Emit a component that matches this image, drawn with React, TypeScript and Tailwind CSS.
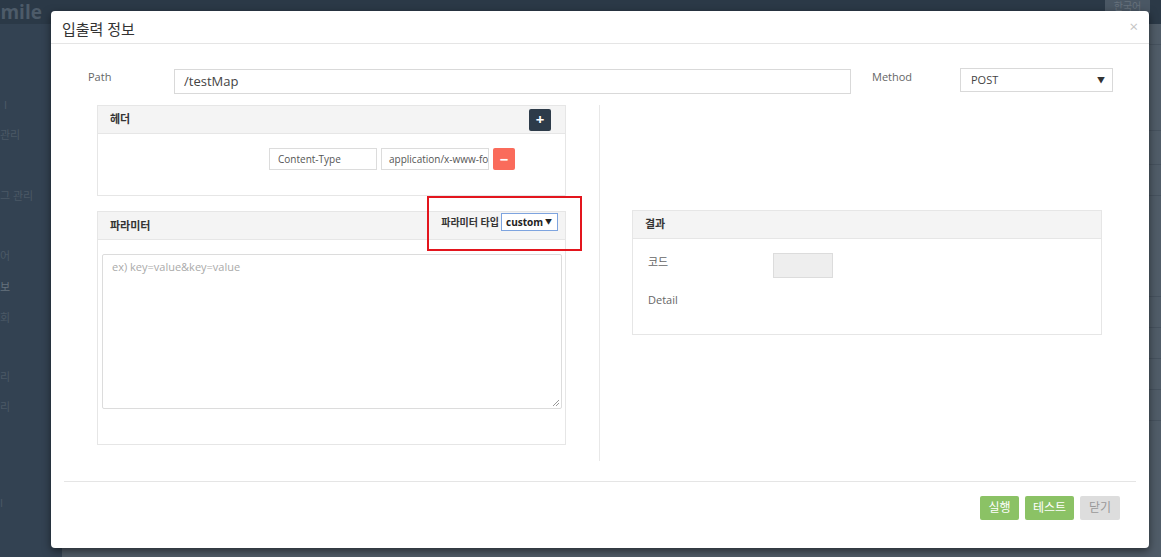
import React from "react";

const font = "font-['Open_Sans','Noto_Sans_CJK_KR',sans-serif]";

function PanelHeading({ children }: { children: React.ReactNode }) {
  return (
    <div className="flex h-[28px] items-center justify-between border-b border-[#e6e6e6] bg-[#f4f4f4] pl-[12px] pr-[14px]">
      {children}
    </div>
  );
}

export default function App() {
  return (
    <div className={`relative h-[557px] w-[1161px] overflow-hidden bg-[#505c68] ${font}`}>
      {/* background page (dimmed) */}
      <div className="flex h-full flex-col">
        <div className="flex h-[24px] items-start justify-between bg-[#2b3947]">
          <span className="-ml-[10px] text-[19px] font-bold leading-[24px] text-[#4d5b69]">Smile</span>
          <span className="mr-[11px] h-[13px] w-[45px] bg-[#4a5764] text-center text-[10px] leading-[13px] text-[#66717c]">한국어</span>
        </div>
        <div className="flex flex-1">
          <div className="flex w-[62px] flex-col bg-[#334252] text-[11px] text-[#4b5966]">
            <div className="mt-[74px] leading-[14px]">Ⅰ</div>
            <div className="mt-[16px] leading-[14px]">관리</div>
            <div className="mt-[47px] leading-[14px]">그 관리</div>
            <div className="mt-[46px] leading-[14px]">어</div>
            <div className="mt-[17px] leading-[14px] text-[#66727e]">보</div>
            <div className="mt-[17px] leading-[14px]">회</div>
            <div className="mt-[45px] leading-[14px]">리</div>
            <div className="mt-[16px] leading-[14px]">리</div>
            <div className="mt-[82px] leading-[14px]">I</div>
          </div>
          <div className="flex flex-1 flex-col">
            <div className="mt-[20px] h-[1px] bg-[#46525e]" />
            <div className="mt-[85px] h-[1px] bg-[#46525e]" />
            <div className="mt-[33px] h-[1px] bg-[#46525e]" />
            <div className="mt-[30px] h-[1px] bg-[#46525e]" />
            <div className="mt-[100px] h-[1px] bg-[#46525e]" />
            <div className="mt-[30px] h-[1px] bg-[#46525e]" />
            <div className="mt-[30px] h-[1px] bg-[#46525e]" />
            <div className="mt-[30px] h-[1px] bg-[#46525e]" />
            <div className="mt-[30px] h-[1px] bg-[#46525e]" />
          </div>
        </div>
      </div>

      {/* modal */}
      <div className="absolute left-[51px] top-[11px] flex h-[537px] w-[1098px] flex-col rounded-[4px] bg-white shadow-[0_3px_9px_rgba(0,0,0,0.5)]">
        <div className="flex h-[33px] items-center justify-between border-b border-[#e5e5e5] pl-[11px] pr-[11px]">
          <span className="mt-[4px] text-[15px] text-[#333]">입출력 정보</span>
          <span className="mt-[-2px] text-[15px] leading-none text-[#c4c4c4]">×</span>
        </div>

        {/* path / method row */}
        <div className="mt-[25px] flex items-start pl-[37px]">
          <span className="w-[86px] text-[11px] text-[#666]">Path</span>
          <div className="flex h-[25px] w-[677px] items-center border border-[#d9d9d9] px-[9px] text-[13px] text-[#444]">
            /testMap
          </div>
          <span className="ml-[21px] w-[88px] text-[11px] text-[#666]">Method</span>
          <div className="-mt-[1px] flex h-[24px] w-[153px] items-center justify-between border border-[#d9d9d9] pl-[10px] pr-[7px] text-[11px] text-[#444]">
            <span>POST</span>
            <span className="text-[8px] text-[#333]">▼</span>
          </div>
        </div>

        {/* columns */}
        <div className="mt-[11px] flex pl-[46px]">
          <div className="flex w-[469px] flex-col">
            <div className="h-[91px] border border-[#e6e6e6]">
              <PanelHeading>
                <span className="text-[11px] font-bold text-[#333]">헤더</span>
                <span className="flex h-[22px] w-[22px] items-center justify-center rounded-[2px] bg-[#2d3b4a] text-[15px] font-bold leading-none text-white">+</span>
              </PanelHeading>
              <div className="flex gap-[4px] pl-[171px] pt-[14px]">
                <div className="flex h-[22px] w-[108px] items-center border border-[#dcdcdc] px-[8px] text-[10px] text-[#555]">Content-Type</div>
                <div className="flex h-[22px] w-[108px] items-center overflow-hidden whitespace-nowrap border border-[#dcdcdc] px-[7px] text-[10px] text-[#555]">application/x-www-form</div>
                <span className="flex h-[22px] w-[22px] items-center justify-center rounded-[2px] bg-[#fa6b5b] text-[15px] font-bold leading-none text-white">−</span>
              </div>
            </div>

            <div className="mt-[15px] h-[234px] border border-[#e6e6e6]">
              <div className="flex h-[28px] items-start justify-between border-b border-[#e6e6e6] bg-[#f4f4f4] pl-[12px] pr-[7px]">
                <span className="mt-[6px] text-[11px] font-bold text-[#333]">파라미터</span>
                <div className="mt-[1px] flex items-center gap-[2px]">
                  <span className="text-[10px] font-semibold text-[#333]">파라미터 타입</span>
                  <div className="flex h-[18px] w-[57px] items-center justify-between border border-[#7ea4df] bg-white pl-[4px] pr-[5px] text-[10px] font-bold text-[#222]">
                    <span>custom</span>
                    <span className="text-[7px]">▼</span>
                  </div>
                </div>
              </div>
              <div className="pl-[4px] pr-[3px] pt-[14px]">
                <div className="relative h-[155px] rounded-[2px] border border-[#dcdcdc] px-[9px] pt-[4px] text-[11px] text-[#aaa]">
                  ex) key=value&amp;key=value
                  <svg className="absolute bottom-[1px] right-[1px]" width="9" height="9" viewBox="0 0 9 9">
                    <path d="M8 2 L2 8 M8 5 L5 8" stroke="#999" strokeWidth="1" />
                  </svg>
                </div>
              </div>
            </div>
          </div>

          <div className="ml-[33px] h-[356px] w-[1px] bg-[#e8e8e8]" />

          <div className="ml-[32px] mt-[105px] w-[470px]">
            <div className="h-[125px] border border-[#e6e6e6]">
              <PanelHeading>
                <span className="text-[11px] font-bold text-[#333]">결과</span>
              </PanelHeading>
              <div className="flex items-start pl-[15px] pt-[14px]">
                <span className="mt-[1px] w-[125px] text-[11px] text-[#666]">코드</span>
                <div className="h-[25px] w-[60px] border border-[#dcdcdc] bg-[#eeeeee]" />
              </div>
              <div className="pl-[15px] pt-[14px] text-[11px] text-[#666]">Detail</div>
            </div>
          </div>
        </div>

        {/* footer */}
        <div className="mx-[13px] mt-[20px] border-t border-[#e5e5e5] pr-[16px] pt-[14px]">
          <div className="flex justify-end gap-[6px]">
            <span className="flex h-[24px] w-[39px] items-center justify-center rounded-[2px] bg-[#8bc265] text-[12px] text-white">실행</span>
            <span className="flex h-[24px] w-[49px] items-center justify-center rounded-[2px] bg-[#8bc265] text-[12px] text-white">테스트</span>
            <span className="flex h-[24px] w-[40px] items-center justify-center rounded-[2px] bg-[#dddddd] text-[12px] text-[#999]">닫기</span>
          </div>
        </div>

        {/* red annotation box */}
        <div className="absolute left-[376px] top-[185px] h-[55px] w-[155px] border-2 border-[#e3151d]" />
      </div>
    </div>
  );
}
